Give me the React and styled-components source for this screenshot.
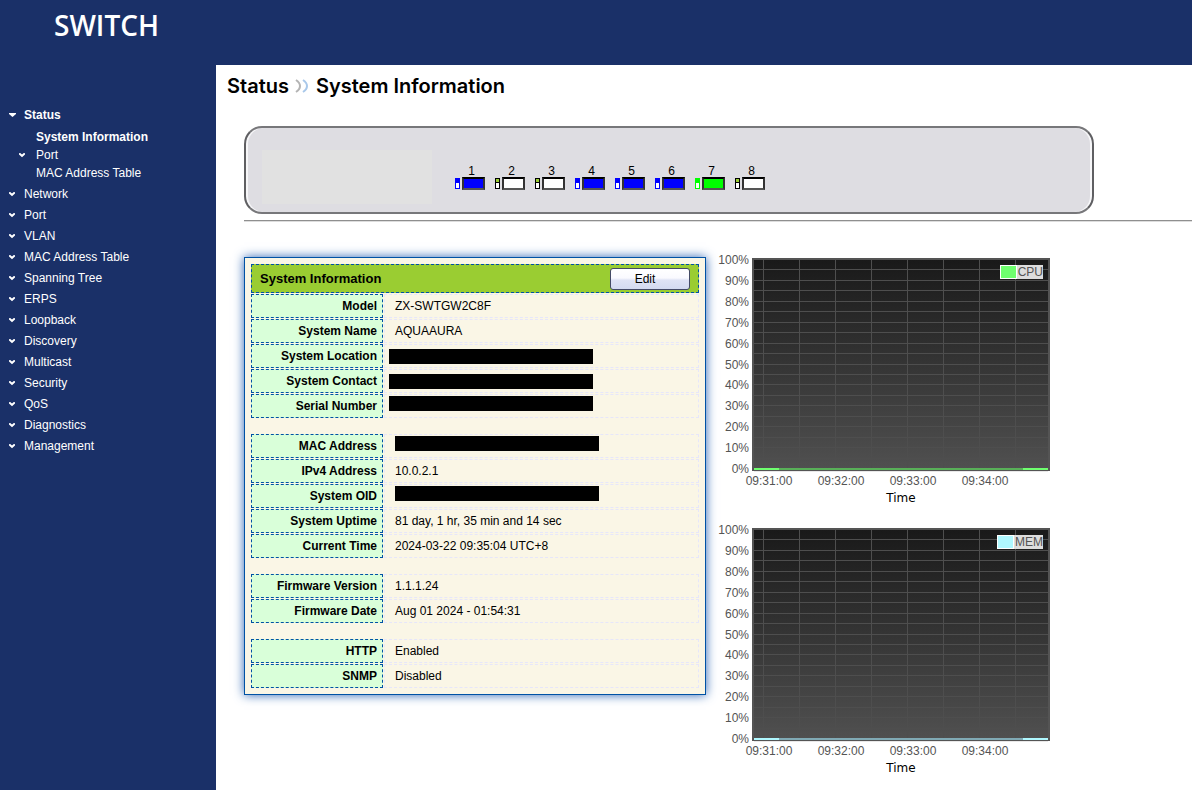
import React, { useState } from "react";
import styled, { createGlobalStyle, css } from "styled-components";

const GlobalStyle = createGlobalStyle`
  * {
    box-sizing: border-box;
  }

  html,
  body {
    margin: 0;
    min-height: 100vh;
    background: #1a3068;
  }

  body {
    font-family: "Liberation Sans", Arial, sans-serif;
    font-size: 12px;
    color: #000;
  }
`;

const Page = styled.div`
  display: flex;
  flex-direction: column;
  height: 100vh;
`;

const TopBar = styled.header`
  display: flex;
  flex: none;
  height: 65px;
  padding: 5px 54px;
`;

const Logo = styled.div`
  color: #fff;
  font-family: "Open Sans", sans-serif;
  font-size: 28px;
  font-weight: 600;
  line-height: 40px;
`;

const Body = styled.div`
  display: flex;
  flex: 1;
  min-height: 0;
`;

const Sidebar = styled.nav`
  flex: none;
  width: 216px;
  padding-top: 39px;
  padding-left: 8px;
`;

const MenuList = styled.ul`
  list-style: none;
  margin: 0;
  padding: 0;
`;

const SubList = styled(MenuList)`
  padding: 3px 0 1px 10px;
`;

const MenuLink = styled.a`
  display: flex;
  align-items: center;
  gap: ${(p) => (p.$sub ? "10px" : "8px")};
  height: ${(p) => (p.$sub ? "18px" : "21px")};
  color: #fff;
  font-weight: ${(p) => (p.$bold ? 700 : 400)};
  text-decoration: none;
`;

const ArrowSlot = styled.span`
  display: flex;
  width: 8px;
`;

const Main = styled.main`
  flex: 1;
  min-width: 0;
  overflow: hidden;
  background: #fff;
`;

const Heading = styled.h1`
  display: flex;
  align-items: center;
  gap: 6px;
  margin: 0;
  padding: 6px 11px;
  font-family: Inter, sans-serif;
  font-size: 20px;
  font-weight: 600;
  line-height: 30px;
`;

const Content = styled.div`
  padding-left: 28px;
`;

const DevicePanel = styled.section`
  display: flex;
  align-items: flex-start;
  max-width: 850px;
  height: 88px;
  margin-top: 19px;
  padding: 22px 16px;
  border: 2px solid #77777a;
  border-left-color: #5f5f62;
  border-right-color: #5f5f62;
  border-radius: 18px;
  background: #dedde2;
  box-shadow: inset 2px 0 0 #f6f6f8, inset -2px 0 0 #f6f6f8;
`;

const NamePlate = styled.div`
  width: 170px;
  height: 54px;
  background: #e1e1e1;
`;

const PortRow = styled.div`
  display: flex;
  gap: 10px;
  margin-left: 23px;
  padding-top: 14px;
`;

const Port = styled.div`
  display: grid;
  grid-template-columns: 5px 23px;
  column-gap: 2px;
  align-items: center;
  width: 30px;
`;

const PortNumber = styled.span`
  grid-column: 1 / -1;
  height: 13px;
  padding-left: 3px;
  line-height: 14px;
  text-align: center;
`;

const Led = styled.span`
  height: 11px;
  border: 1px solid ${(p) => p.$color};
  background: linear-gradient(${(p) => p.$fill} 3px, ${(p) => p.$color} 3px, ${(p) => p.$color} 4px, #fff 4px);
`;

const Jack = styled.span`
  height: 13px;
  border: 2px solid;
  border-color: #000 #333 #555 #333;
  background: ${(p) => p.$fill};
`;

const Rule = styled.hr`
  height: 2px;
  margin: 6px 0 35px;
  border: 0;
  border-top: 1px solid #8f8f8f;
  border-bottom: 1px solid #ddd;
`;

const Columns = styled.div`
  display: flex;
  align-items: flex-start;
  gap: 10px;
`;

const InfoBox = styled.section`
  flex: none;
  width: 462px;
  padding: 5px;
  border: 1px solid #0052a5;
  background: #faf6e6;
  box-shadow: 0 0 10px #2f66b5;
`;

const InfoTable = styled.table`
  width: 100%;
  border-collapse: separate;
  border-spacing: 1px;
  font-size: 12px;
  line-height: 14px;
`;

const TitleCell = styled.th`
  height: 29px;
  padding: 0 8px;
  border: 1px dashed #0052a5;
  background: #9acd32;
  font-size: 13px;
  text-align: left;
`;

const TitleRow = styled.div`
  display: flex;
  align-items: center;
  justify-content: space-between;
`;

const EditButton = styled.button`
  width: 80px;
  height: 22px;
  padding: 0 10px 0 0;
  border: 1px solid #444a66;
  border-radius: 3px;
  background: linear-gradient(#fff 0%, #fafaff 45%, #dfe3f5 55%, #d3daf0 100%);
  color: #000;
  font-family: inherit;
  font-size: 12px;
  cursor: pointer;
`;

const LabelCell = styled.th`
  width: 132px;
  height: 24px;
  padding: 0 5px;
  border: 1px dashed #0052a5;
  background: #d9ffd9;
  text-align: right;
`;

const ValueCell = styled.td`
  height: 24px;
  padding: 1px 10px;
  border: 1px dashed #e6e6fa;
  vertical-align: ${(p) => p.$align || "middle"};
`;

const SpacerCell = styled.td`
  height: 14px;
  padding: 0;
`;

const Redacted = styled.span`
  display: block;
  width: 204px;
  height: 15px;
  background: #000;
  ${(p) =>
    p.$outdent &&
    css`
      margin-left: -6px;
    `}
`;

const Charts = styled.div`
  display: flex;
  flex: none;
  flex-direction: column;
`;

const ChartSvg = styled.svg`
  display: block;
  width: 340px;
  height: 270px;
  overflow: visible;
  font-size: 12px;
`;

const menu = [
  "Network",
  "Port",
  "VLAN",
  "MAC Address Table",
  "Spanning Tree",
  "ERPS",
  "Loopback",
  "Discovery",
  "Multicast",
  "Security",
  "QoS",
  "Diagnostics",
  "Management",
];

const ports = ["blue", "off", "off", "blue", "blue", "blue", "green", "off"];

const portColors = {
  blue: { color: "#00f", led: "#00f", jack: "#00f" },
  green: { color: "#0f0", led: "#0f0", jack: "#0f0" },
  off: { color: "#000", led: "#9acd32", jack: "#fff" },
};

const groups = [
  [
    { label: "Model", value: "ZX-SWTGW2C8F" },
    { label: "System Name", value: "AQUAAURA" },
    { label: "System Location", redacted: true, outdent: true },
    { label: "System Contact", redacted: true, outdent: true },
    { label: "Serial Number", redacted: true, outdent: true, align: "top" },
  ],
  [
    { label: "MAC Address", redacted: true, align: "top" },
    { label: "IPv4 Address", value: "10.0.2.1" },
    { label: "System OID", redacted: true, align: "top" },
    { label: "System Uptime", value: "81 day, 1 hr, 35 min and 14 sec" },
    { label: "Current Time", value: "2024-03-22 09:35:04 UTC+8" },
  ],
  [
    { label: "Firmware Version", value: "1.1.1.24" },
    { label: "Firmware Date", value: "Aug 01 2024 - 01:54:31" },
  ],
  [
    { label: "HTTP", value: "Enabled" },
    { label: "SNMP", value: "Disabled" },
  ],
];

function Arrow({ open }) {
  return (
    <svg width="8" height="6" viewBox="0 0 8 6" fill="#fff" aria-hidden="true">
      {open ? (
        <path d="M1 1h7v1L4.5 5 1 2z" />
      ) : (
        <path d="M1 1.2 2.2 1 4 2.4 5.8 1 7 1.2V2.6L4 5.2 1 2.6z" />
      )}
    </svg>
  );
}

function MenuItem({ label, arrow, open, bold, sub, onSelect }) {
  return (
    <MenuLink href="#" $bold={bold} $sub={sub} onClick={onSelect}>
      <ArrowSlot>{arrow && <Arrow open={open} />}</ArrowSlot>
      {label}
    </MenuLink>
  );
}

function Chart({ id, name, color, dim, legendX }) {
  const rows = Array.from({ length: 21 }, (_, i) => i);
  const cols = Array.from({ length: 8 }, (_, i) => i);
  const times = ["09:31:00", "09:32:00", "09:33:00", "09:34:00"];

  return (
    <ChartSvg viewBox="0 0 340 270" role="img" aria-label={`${name} usage`}>
      <defs>
        <linearGradient id={id} x1="0" y1="0" x2="0" y2="1">
          <stop offset="0" stopColor="#191919" />
          <stop offset="1" stopColor="#505050" />
        </linearGradient>
      </defs>
      <rect x="38" y="213" width="294" height="2" fill="#e8e8e8" />
      <rect x="37" y="2" width="296" height="210" fill={`url(#${id})`} />
      {rows.slice(1, 20).map((i) => (
        <rect key={i} x="38" y={Math.round(2 + i * 10.45)} width="294" height="1" fill="#4e4e4e" />
      ))}
      {cols.map((i) => (
        <rect key={i} x={47 + i * 36} y="3" width="1" height="208" fill="#4e4e4e" />
      ))}
      <rect x="37" y="2" width="296" height="211" fill="none" stroke="#545454" strokeWidth="2" />
      <rect x="38" y="211" width="294" height="2" fill={dim} />
      <rect x="38" y="211" width="25" height="2" fill={color} />
      <rect x="307" y="211" width="25" height="2" fill={color} />
      <rect x={legendX} y="8" width={327 - legendX} height="14" fill="#ddd" />
      <rect x={legendX} y="8" width="17" height="14" fill="#fff" />
      <rect x={legendX + 1} y="9" width="15" height="12" fill={color} />
      <text x="327" y="19" textAnchor="end" fill="#545454">
        {name}
      </text>
      {rows
        .filter((i) => i % 2 === 0)
        .map((i) => (
          <text key={i} x="33" y={Math.round(7 + i * 10.45)} textAnchor="end" fill="#545454">
            {100 - i * 5}%
          </text>
        ))}
      {times.map((time, i) => (
        <text key={time} x={53 + i * 72} y="228" textAnchor="middle" fill="#545454">
          {time}
        </text>
      ))}
      <text x="185" y="245" textAnchor="middle" fontFamily="DejaVu Sans, sans-serif">
        Time
      </text>
    </ChartSvg>
  );
}

function App() {
  const [current, setCurrent] = useState("System Information");

  return (
    <Page>
      <GlobalStyle />
      <TopBar>
        <Logo>SWITCH</Logo>
      </TopBar>
      <Body>
        <Sidebar>
          <MenuList>
            <li>
              <MenuItem label="Status" arrow open bold />
              <SubList>
                {["System Information", "Port", "MAC Address Table"].map((label) => (
                  <li key={label}>
                    <MenuItem
                      label={label}
                      arrow={label === "Port"}
                      bold={label === current}
                      sub
                      onSelect={() => setCurrent(label)}
                    />
                  </li>
                ))}
              </SubList>
            </li>
            {menu.map((label) => (
              <li key={label}>
                <MenuItem label={label} arrow />
              </li>
            ))}
          </MenuList>
        </Sidebar>
        <Main>
          <Heading>
            Status
            <svg width="15" height="14" viewBox="0 0 15 14" fill="none" strokeWidth="2" aria-hidden="true">
              <path d="M1 1c3 2 4 4 4 6s-1 4-4 6" stroke="#b4b4b4" />
              <path d="M8 1c3 2 4 4 4 6s-1 4-4 6" stroke="#a9c8ea" />
            </svg>
            System Information
          </Heading>
          <Content>
            <DevicePanel>
              <NamePlate />
              <PortRow>
                {ports.map((state, i) => (
                  <Port key={i}>
                    <PortNumber>{i + 1}</PortNumber>
                    <Led $color={portColors[state].color} $fill={portColors[state].led} />
                    <Jack $fill={portColors[state].jack} />
                  </Port>
                ))}
              </PortRow>
            </DevicePanel>
            <Rule />
            <Columns>
              <InfoBox>
                <InfoTable>
                  <thead>
                    <tr>
                      <TitleCell colSpan={2}>
                        <TitleRow>
                          System Information
                          <EditButton type="button">Edit</EditButton>
                        </TitleRow>
                      </TitleCell>
                    </tr>
                  </thead>
                  {groups.map((rows, g) => (
                    <tbody key={g}>
                      {g > 0 && (
                        <tr>
                          <SpacerCell colSpan={2} />
                        </tr>
                      )}
                      {rows.map((row) => (
                        <tr key={row.label}>
                          <LabelCell scope="row">{row.label}</LabelCell>
                          <ValueCell $align={row.align}>
                            {row.redacted ? <Redacted $outdent={row.outdent} /> : row.value}
                          </ValueCell>
                        </tr>
                      ))}
                    </tbody>
                  ))}
                </InfoTable>
              </InfoBox>
              <Charts>
                <Chart id="cpu" name="CPU" color="#6fff6f" dim="#58b058" legendX={284} />
                <Chart id="mem" name="MEM" color="#aff8ff" dim="#80aab5" legendX={281} />
              </Charts>
            </Columns>
          </Content>
        </Main>
      </Body>
    </Page>
  );
}

export default App;
